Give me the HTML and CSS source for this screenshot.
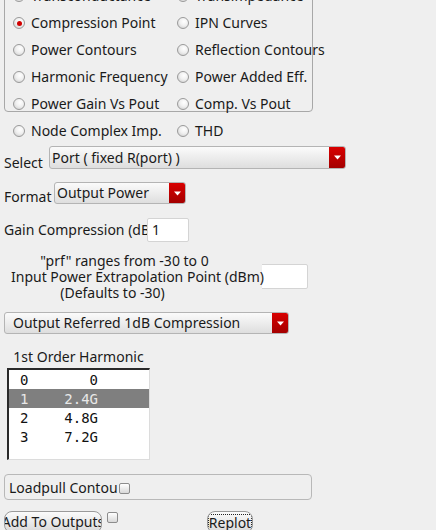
FILE: index.html
```html
<!DOCTYPE html>
<html>
<head>
<meta charset="utf-8">
<link rel="stylesheet" href="styles.css">
</head>
<body>
<div class="page">
  <div class="group">
    <div class="radio-grid">
      <label class="radio"><span class="dot"></span>Transconductance</label>
      <label class="radio"><span class="dot"></span>Transimpedance</label>
      <label class="radio"><span class="dot on"></span>Compression Point</label>
      <label class="radio"><span class="dot"></span>IPN Curves</label>
      <label class="radio"><span class="dot"></span>Power Contours</label>
      <label class="radio"><span class="dot"></span>Reflection Contours</label>
      <label class="radio"><span class="dot"></span>Harmonic Frequency</label>
      <label class="radio"><span class="dot"></span>Power Added Eff.</label>
      <label class="radio"><span class="dot"></span>Power Gain Vs Pout</label>
      <label class="radio"><span class="dot"></span>Comp. Vs Pout</label>
    </div>
  </div>
  <div class="radio-grid outside">
    <label class="radio"><span class="dot"></span>Node Complex Imp.</label>
    <label class="radio"><span class="dot"></span>THD</label>
  </div>

  <div class="row row-select">
    <span class="lbl lbl-select">Select</span>
    <div class="combo combo-port"><span class="combo-text">Port ( fixed R(port) )</span><span class="combo-btn"><svg width="7" height="5" viewBox="0 0 7 5"><polygon points="0,0.5 7,0.5 3.5,4.5" fill="#fff"/></svg></span></div>
  </div>

  <div class="row row-format">
    <span class="lbl lbl-format">Format</span>
    <div class="combo combo-format"><span class="combo-text">Output Power</span><span class="combo-btn"><svg width="7" height="5" viewBox="0 0 7 5"><polygon points="0,0.5 7,0.5 3.5,4.5" fill="#fff"/></svg></span></div>
  </div>

  <div class="row row-gain">
    <span class="lbl lbl-gain">Gain Compression (dB)</span>
    <div class="entry entry-gain">1</div>
  </div>

  <div class="row row-prf">
    <div class="prf-label">
      <div class="prf-line pad1">"prf" ranges from -30 to 0</div>
      <div class="prf-line">Input Power Extrapolation Point (dBm)</div>
      <div class="prf-line pad3">(Defaults to -30)</div>
    </div>
    <div class="entry entry-prf"></div>
  </div>

  <div class="combo combo-ref"><span class="combo-text">Output Referred 1dB Compression</span><span class="combo-btn"><svg width="7" height="5" viewBox="0 0 7 5"><polygon points="0,0.5 7,0.5 3.5,4.5" fill="#fff"/></svg></span></div>

  <div class="harm">
    <div class="harm-title">1st Order Harmonic</div>
    <div class="listbox">
      <div class="lb-row"><span class="c1">0</span><span class="c2">0</span></div>
      <div class="lb-row sel"><span class="c1">1</span><span class="c2">2.4G</span></div>
      <div class="lb-row"><span class="c1">2</span><span class="c2">4.8G</span></div>
      <div class="lb-row"><span class="c1">3</span><span class="c2">7.2G</span></div>
    </div>
  </div>

  <div class="loadpull">
    <span class="lbl lbl-loadpull">Loadpull Contours</span>
    <span class="check"></span>
  </div>

  <div class="row row-buttons">
    <div class="btn btn-add"><span>Add To Outputs</span></div>
    <span class="check check-add"></span>
    <div class="btn btn-replot"><span class="focus">Replot</span></div>
  </div>
</div>
</body>
</html>
```

FILE: styles.css
```css
html, body {
  margin: 0;
  padding: 0;
  background: #efefef;
  overflow: hidden;
}
body {
  font-family: "Noto Sans", "Open Sans", sans-serif;
  font-size: 14px;
  color: #1a1a1a;
  width: 436px;
  height: 530px;
}
.page {
  margin-top: -19px;
}
.group {
  margin-left: 4px;
  width: 307px;
  border: 1px solid #a8a8a8;
  border-radius: 4px;
  padding-top: 6px;
}
.radio-grid {
  display: grid;
  grid-template-columns: 164px 140px;
  grid-auto-rows: 16px;
  row-gap: 11px;
  padding-left: 8px;
  margin-bottom: -1px;
}
.radio-grid.outside {
  margin-top: 11px;
  padding-left: 13px;
  margin-bottom: 0;
}
.radio {
  display: flex;
  align-items: center;
  line-height: 16px;
  white-space: nowrap;
}
.dot {
  width: 10px;
  height: 10px;
  border-radius: 50%;
  border: 1px solid #9a9a9a;
  background: radial-gradient(circle at 60% 35%, #ffffff 0%, #f0f0f0 45%, #c8c8c8 100%);
  margin-right: 6px;
  flex: none;
  display: flex;
  align-items: center;
  justify-content: center;
}
.dot.on::after {
  content: "";
  width: 5px;
  height: 5px;
  border-radius: 50%;
  background: #d00000;
}
.row {
  display: flex;
  align-items: flex-start;
}
.lbl {
  line-height: 16px;
  white-space: nowrap;
  overflow: hidden;
  flex: none;
}
.row-select {
  margin-top: 7px;
}
.lbl-select {
  width: 45px;
  padding-left: 4px;
  margin-top: 9px;
  margin-bottom: -2px;
}
.row-format {
  margin-top: 13px;
}
.lbl-format {
  width: 50px;
  padding-left: 4px;
  margin-top: 7px;
  margin-bottom: -1px;
}
.combo {
  display: flex;
  align-items: stretch;
  border: 1px solid #b4b4b4;
  border-radius: 3px;
  background: linear-gradient(#fbfbfb, #dedede);
  box-sizing: border-box;
  overflow: hidden;
}
.combo-text {
  flex: 1;
  display: flex;
  align-items: center;
  padding-left: 2px;
  line-height: 16px;
  white-space: nowrap;
  overflow: hidden;
}
.combo-btn {
  width: 16px;
  flex: none;
  background: linear-gradient(#d80000, #a40000);
  display: flex;
  align-items: center;
  justify-content: center;
}
.combo-port {
  width: 297px;
  height: 23px;
}
.combo-format {
  width: 132px;
  height: 22px;
}
.row-gain {
  margin-top: 14px;
}
.lbl-gain {
  width: 143px;
  padding-left: 4px;
  margin-top: 4px;
}
.entry {
  background: #fff;
  border: 1px solid #d4d4d4;
  border-radius: 2px;
  box-sizing: border-box;
  line-height: 16px;
}
.entry-gain {
  width: 42px;
  height: 24px;
  padding: 3px 0 0 4px;
}
.row-prf {
  margin-top: 11px;
}
.prf-label {
  margin-left: 11px;
  width: 251px;
  text-align: center;
  background: #efefef;
  position: relative;
  z-index: 1;
  line-height: 16px;
  white-space: nowrap;
}
.prf-line.pad1 {
  padding-right: 24px;
}
.prf-line.pad3 {
  padding-right: 48px;
}
.entry-prf {
  width: 66px;
  height: 25px;
  margin-top: 11px;
  margin-left: -20px;
}
.combo-ref {
  margin-top: 11px;
  margin-left: 4px;
  width: 285px;
  height: 22px;
}
.combo-ref .combo-text {
  padding-left: 8px;
}
.harm {
  margin-left: 7px;
  width: 143px;
  margin-top: 15px;
}
.harm-title {
  text-align: center;
  line-height: 16px;
}
.listbox {
  margin-top: 3px;
  height: 92px;
  box-sizing: border-box;
  background: #fff;
  border-top: 2px solid #2a2a2a;
  border-left: 2px solid #2a2a2a;
  border-right: 1px solid #dcdcdc;
  border-bottom: 1px solid #dcdcdc;
  font-family: "DejaVu Sans Mono", monospace;
  font-size: 14px;
}
.lb-row {
  display: flex;
  height: 19px;
  align-items: center;
  color: #111;
}
.lb-row.sel {
  background: #7f7f7f;
  color: #e8e8e8;
}
.c1 {
  width: 12px;
  padding-left: 11px;
}
.c2 {
  width: 66px;
  text-align: right;
}
.loadpull {
  margin-top: 14px;
  margin-left: 4px;
  width: 308px;
  height: 26px;
  box-sizing: border-box;
  border: 1px solid #b8b8b8;
  border-radius: 4px;
  display: flex;
  align-items: center;
}
.lbl-loadpull {
  width: 109px;
  padding-left: 4px;
  margin-top: 2px;
}
.check {
  width: 11px;
  height: 11px;
  box-sizing: border-box;
  border: 1px solid #8c8c8c;
  border-radius: 2px;
  background: linear-gradient(#ffffff, #d8d8d8);
  flex: none;
  margin-left: 1px;
  margin-top: 2px;
}
.row-buttons {
  margin-top: 11px;
}
.btn {
  height: 22px;
  box-sizing: border-box;
  border: 1px solid #9a9a9a;
  border-radius: 8px;
  background: linear-gradient(#fbfbfb, #d9d9d9);
  display: flex;
  align-items: center;
  justify-content: center;
  overflow: hidden;
  white-space: nowrap;
  line-height: 16px;
}
.btn-add {
  margin-left: 4px;
  width: 98px;
}
.check-add {
  margin-left: 5px;
  margin-top: 1px;
}
.btn-replot {
  margin-left: 89px;
  width: 46px;
}
.focus {
  border: 1px dotted #222;
  padding: 0 0;
  line-height: 15px;
}
```
